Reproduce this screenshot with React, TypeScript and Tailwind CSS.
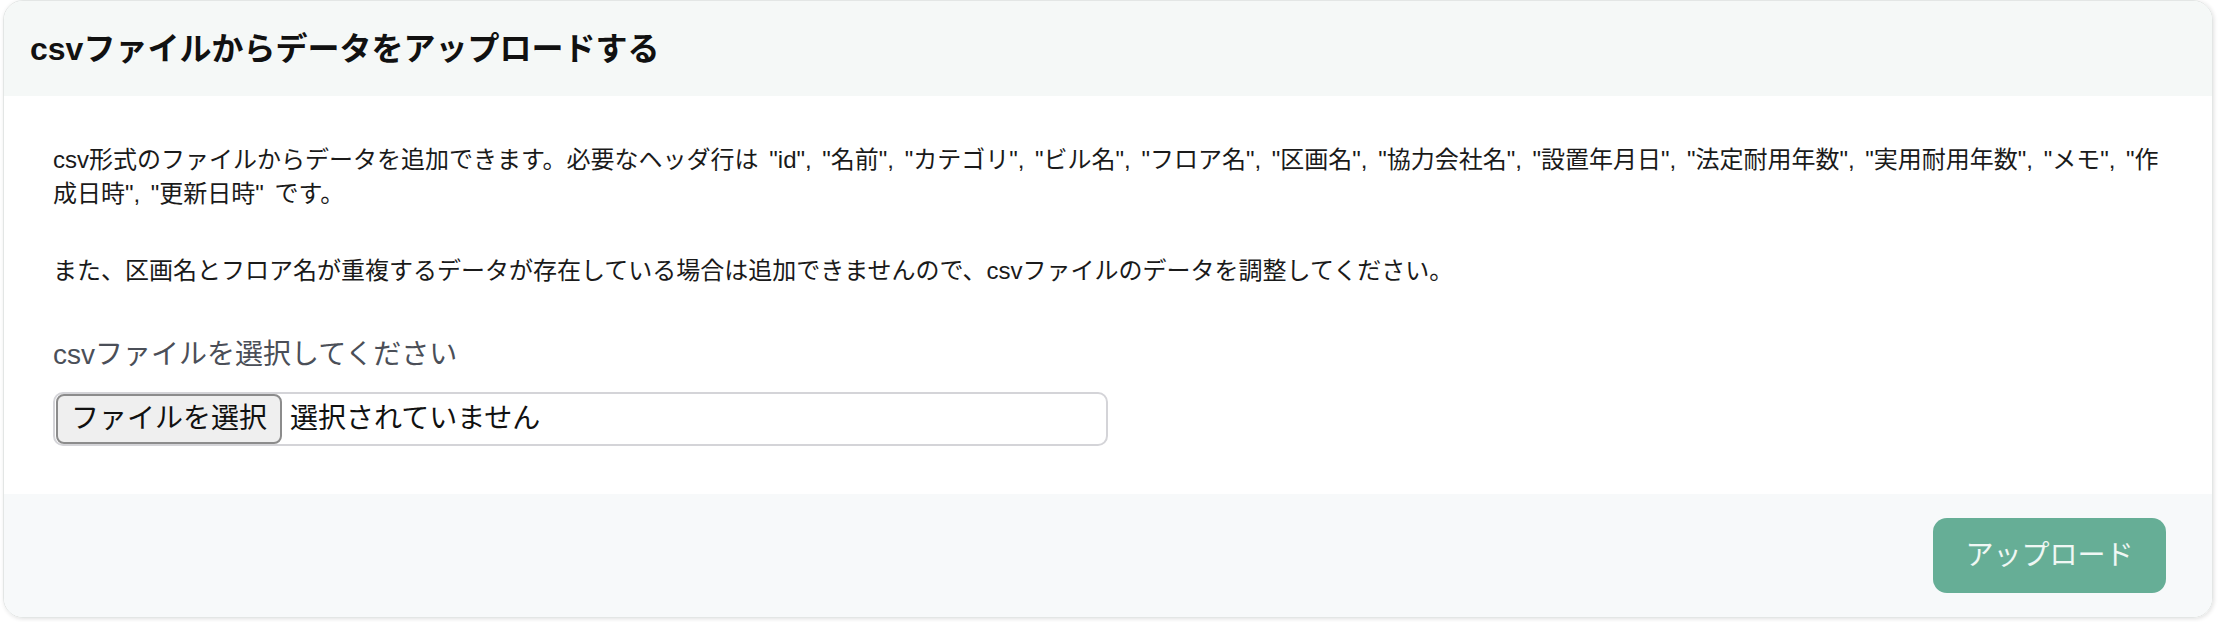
const FONT = "font-['Liberation_Sans','Noto_Sans_CJK_JP',sans-serif]";

const HEADERS = [
  "id",
  "名前",
  "カテゴリ",
  "ビル名",
  "フロア名",
  "区画名",
  "協力会社名",
  "設置年月日",
  "法定耐用年数",
  "実用耐用年数",
  "メモ",
  "作成日時",
  "更新日時",
];

function FilePicker() {
  return (
    <div className="flex h-[54px] w-[1055px] items-center rounded-[10px] border-2 border-[#d4d4d8] bg-white pl-[1px]">
      <div className="flex h-[50px] w-[226px] items-center justify-center rounded-[8px] border-2 border-[#8c8c8c] bg-[#efefef] text-[28px] text-[#111]">
        ファイルを選択
      </div>
      <span className="ml-[8px] text-[28px] text-[#111]">選択されていません</span>
    </div>
  );
}

export default function App() {
  const headerList = HEADERS.map((h) => `"${h}"`).join(", ");

  return (
    <div className={`${FONT} min-h-[622px] bg-white`}>
      <div className="ml-[3px] w-[2210px] overflow-hidden rounded-[20px] border border-[#e3e6e5] shadow-[1px_1px_4px_rgba(0,0,0,0.12)]">
        <div className="flex h-[95px] items-center bg-[#f5f8f7] px-[26px]">
          <h2 className="text-[32px] font-bold text-[#111]">
            csvファイルからデータをアップロードする
          </h2>
        </div>

        <div className="bg-white px-[49px] pt-[47px] pb-[48px] text-[24px] leading-[34px] text-[#1a1a1a]">
          <p className="[word-spacing:4px]">
            csv形式のファイルからデータを追加できます。必要なヘッダ行は {headerList} です。
          </p>
          <p className="mt-[43px]">
            また、区画名とフロア名が重複するデータが存在している場合は追加できませんので、csvファイルのデータを調整してください。
          </p>

          <label className="mt-[47px] block text-[28px] leading-[40px] text-[#4b4f58]">
            csvファイルを選択してください
          </label>
          <div className="mt-[17px]">
            <FilePicker />
          </div>
        </div>

        <div className="flex h-[123px] items-center justify-end bg-[#f7f9fa] pr-[46px]">
          <button
            type="button"
            className="flex h-[75px] w-[233px] items-center justify-center rounded-[14px] bg-[#66ae96] text-[28px] text-white/90"
          >
            アップロード
          </button>
        </div>
      </div>
    </div>
  );
}
